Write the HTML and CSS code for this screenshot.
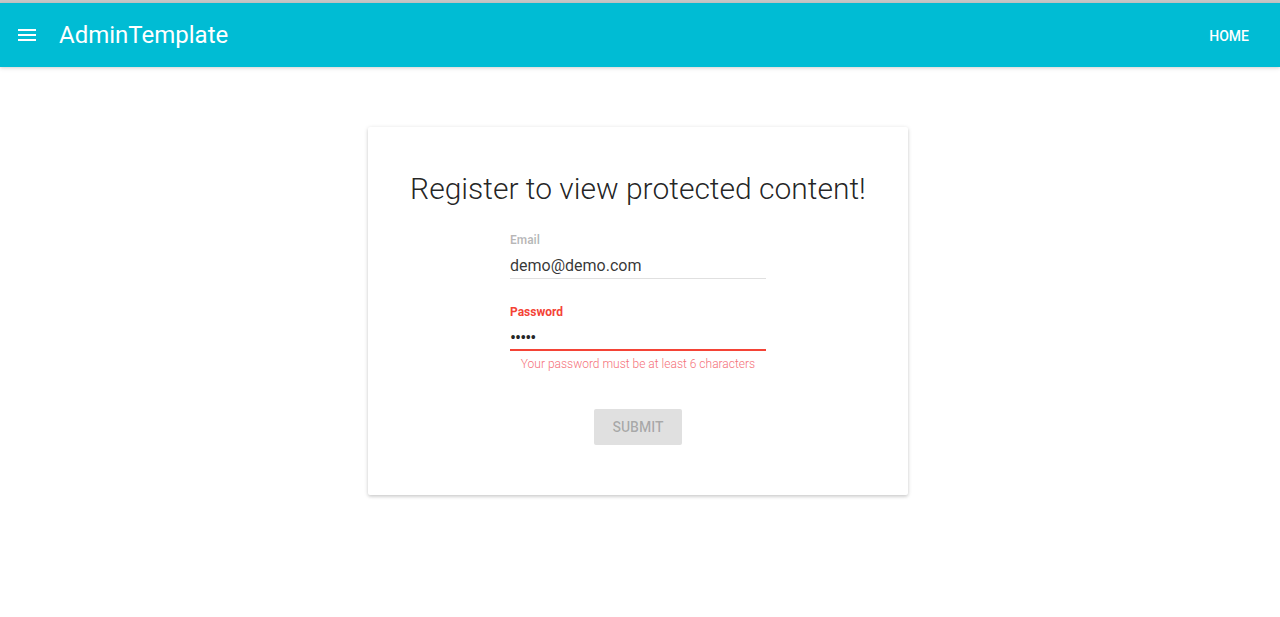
FILE: index.html
```html
<!DOCTYPE html>
<html>
<head>
<meta charset="utf-8">
<link rel="stylesheet" href="styles.css">
</head>
<body>
<div class="topline"></div>
<header class="toolbar">
  <button class="menu-btn" aria-label="menu">
    <svg width="24" height="24" viewBox="0 0 24 24"><path d="M3 18h18v-2H3v2zm0-5h18v-2H3v2zm0-7v2h18V6H3z" fill="#fff"/></svg>
  </button>
  <span class="brand">AdminTemplate</span>
  <span class="spacer"></span>
  <a class="nav-link">HOME</a>
</header>
<main class="content">
  <section class="card">
    <h1 class="title">Register to view protected content!</h1>
    <form class="form">
      <div class="field">
        <label class="label">Email</label>
        <div class="value">demo@demo.com</div>
        <div class="line"></div>
      </div>
      <div class="field invalid">
        <label class="label">Password</label>
        <div class="value dots">•••••</div>
        <div class="line"></div>
        <div class="error">Your password must be at least 6 characters</div>
      </div>
      <div class="actions">
        <button type="button" class="submit">SUBMIT</button>
      </div>
    </form>
  </section>
</main>
</body>
</html>
```
FILE: styles.css
```css
html, body {
  margin: 0;
  padding: 0;
  background: #fff;
  font-family: Roboto, "Helvetica Neue", sans-serif;
}
.topline {
  height: 3px;
  background: #c6c6c6;
}
.toolbar {
  height: 64px;
  background: #00bcd4;
  color: #fff;
  display: flex;
  align-items: center;
  padding: 0 16px 0 15px;
  box-shadow: 0 1px 3px rgba(0,0,0,.12), 0 2px 5px rgba(0,0,0,.06);
  position: relative;
  z-index: 2;
}
.menu-btn {
  width: 24px;
  height: 24px;
  padding: 0;
  border: 0;
  background: none;
  display: flex;
}
.brand {
  margin-left: 20px;
  font-size: 24px;
  font-weight: 400;
}
.spacer { flex: 1; }
.nav-link {
  font-size: 14px;
  font-weight: 500;
  padding: 0 15px;
  line-height: 36px;
  margin-top: 2px;
}
.content {
  display: flex;
  justify-content: center;
  padding-top: 60px;
  padding-bottom: 40px;
  padding-right: 4px;
}
.card {
  width: 540px;
  height: 368px;
  box-sizing: border-box;
  background: #fff;
  border-radius: 2px;
  box-shadow: 0 1px 4px rgba(0,0,0,.16), 0 2px 3px rgba(0,0,0,.08);
  padding-top: 44px;
  display: flex;
  flex-direction: column;
  align-items: center;
}
.title {
  margin: 0;
  font-size: 30px;
  font-weight: 300;
  color: rgba(0,0,0,.87);
  line-height: 36px;
}
.form {
  width: 256px;
  margin-top: 26px;
  display: flex;
  flex-direction: column;
}
.field {
  position: relative;
  margin-bottom: 26px;
}
.label {
  display: block;
  font-size: 12px;
  font-weight: 700;
  color: rgba(0,0,0,.28);
  line-height: 14px;
}
.value {
  font-size: 16px;
  color: rgba(0,0,0,.8);
  line-height: 20px;
  margin-top: 9px;
}
.line {
  margin-top: 2px;
  height: 1px;
  background: #e0e0e0;
}
.invalid { margin-bottom: 20px; }
.invalid .label { color: #f44336; }
.invalid .value { margin-top: 9px; color: rgba(0,0,0,.87); }
.invalid .line { height: 2px; background: #f44336; margin-top: 1px; }
.dots {
  letter-spacing: -1px;
  font-size: 18px;
}
.error {
  font-size: 12px;
  color: #f5727a;
  font-weight: 300;
  text-align: center;
  line-height: 14px;
  margin-top: 6px;
}
.actions {
  display: flex;
  justify-content: center;
  margin-top: 18px;
}
.submit {
  width: 88px;
  height: 36px;
  border: 0;
  border-radius: 2px;
  background: #e0e0e0;
  color: rgba(0,0,0,.26);
  font-family: Roboto, sans-serif;
  font-size: 14px;
  font-weight: 500;
}
```
